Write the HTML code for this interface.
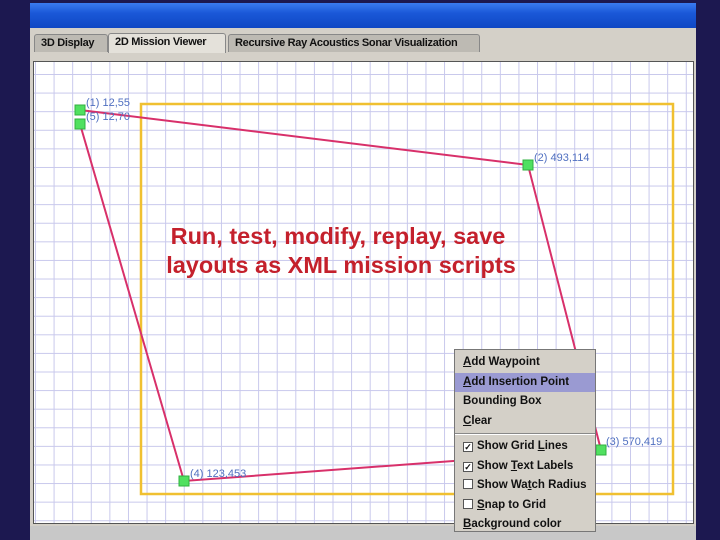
<!DOCTYPE html>
<html><head><style>
body{margin:0;width:720px;height:540px;background:#1c1850;position:relative;overflow:hidden;font-family:"Liberation Sans",sans-serif}
.win{position:absolute;left:30px;top:3px;width:666px;height:537px;background:#d4d0c8}
.title{position:absolute;left:0;top:0;width:666px;height:25px;background:linear-gradient(#3a7bf0,#1a58d8 40%,#0f47c4)}
.tab{position:absolute;top:31px;height:17px;background:#bdbab3;border:1px solid #888;border-bottom:none;border-radius:3px 3px 0 0;font-size:11px;font-weight:bold;line-height:17px;padding-left:6px;color:#111;letter-spacing:-0.3px}
.sel{background:#e4e1da;top:30px;height:19px}
.grid{position:absolute;left:34px;top:62px;width:659px;height:461px;background-color:#fff;
background-image:linear-gradient(90deg,#c8c8ec 1px,transparent 1px),linear-gradient(#c8c8ec 1px,transparent 1px);
background-size:18.6px 18.6px;background-position:1px 12px}
.menu{position:absolute;left:454px;top:349px;width:142px;height:183px;background:#d4d0c8;border:1px solid #777;font-size:11.5px;font-weight:bold;color:#111;padding-top:3px;box-sizing:border-box}
.menu div{height:19.5px;line-height:19.5px;padding-left:8px}
.menu .hl{background:#9a9ad2}
.menu .sep{height:0;border-top:1px solid #888;border-bottom:1px solid #fff;margin:2px 0}
.cb{display:inline-block;width:8px;height:8px;border:1px solid #555;background:#fff;margin-right:4px;vertical-align:-1px;font-size:9px;line-height:8px;text-align:center}
</style></head><body>
<div class="win">
<div class="title"></div>
<div class="tab" style="left:4px;width:66px">3D Display</div>
<div class="tab sel" style="left:78px;width:110px">2D Mission Viewer</div>
<div class="tab" style="left:198px;width:244px">Recursive Ray Acoustics Sonar Visualization</div>
</div>
<div style="position:absolute;left:33px;top:61px;width:659px;height:461px;border:1px solid #555"></div>
<div class="grid"></div>
<svg style="position:absolute;left:0;top:0" width="720" height="540">
<rect x="30" y="526" width="666" height="14" fill="#c8c8c8"/>
<rect x="141" y="104" width="532" height="390" fill="none" stroke="#f0c030" stroke-width="2.5"/>
<polyline points="80,110 528,165 601,450 184,481 80,124" fill="none" stroke="#d8306a" stroke-width="2"/>
<g fill="#50e060" stroke="#30b040"><rect x="75" y="105" width="10" height="10"/><rect x="75" y="119" width="10" height="10"/><rect x="523" y="160" width="10" height="10"/><rect x="596" y="445" width="10" height="10"/><rect x="179" y="476" width="10" height="10"/></g>
<g fill="#5070c0" font-size="11" font-family="Liberation Sans"><text x="86" y="106">(1) 12,55</text><text x="86" y="120">(5) 12,70</text><text x="534" y="161">(2) 493,114</text><text x="606" y="445">(3) 570,419</text><text x="190" y="477">(4) 123,453</text></g>
<g fill="#c4202c" font-size="23.5" font-weight="bold" font-family="Liberation Sans" text-anchor="middle"><text x="338" y="244">Run, test, modify, replay, save</text><text x="341" y="273">layouts as XML mission scripts</text></g>
</svg>
<div class="menu">
<div><u>A</u>dd Waypoint</div>
<div class="hl"><u>A</u>dd Insertion Point</div>
<div>Bounding Box</div>
<div><u>C</u>lear</div>
<div class="sep"></div>
<div><span class="cb">✓</span>Show Grid <u>L</u>ines</div>
<div><span class="cb">✓</span>Show <u>T</u>ext Labels</div>
<div><span class="cb"></span>Show Wa<u>t</u>ch Radius</div>
<div><span class="cb"></span><u>S</u>nap to Grid</div>
<div><u>B</u>ackground color</div>
</div>
</body></html>
